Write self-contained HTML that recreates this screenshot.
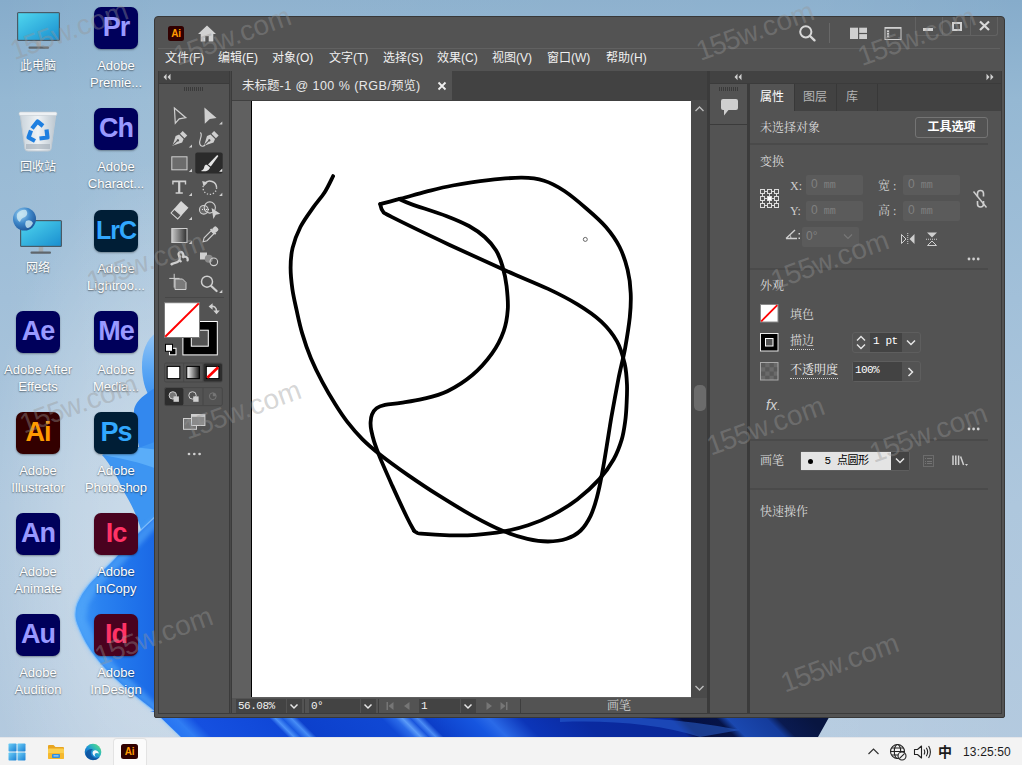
<!DOCTYPE html>
<html lang="zh-CN">
<head>
<meta charset="utf-8">
<title>Adobe Illustrator</title>
<style>
*{box-sizing:border-box;margin:0;padding:0}
html,body{width:1022px;height:765px;overflow:hidden}
body{position:relative;font-family:"Liberation Sans","Noto Sans CJK SC",sans-serif;background:#a9c4dc}
.abs{position:absolute}
#desk{position:absolute;left:0;top:0;width:1022px;height:765px;overflow:hidden;
 background:radial-gradient(ellipse 180px 380px at 160px 540px,rgba(255,255,255,.34) 0,rgba(255,255,255,.22) 50%,rgba(255,255,255,0) 100%),linear-gradient(90deg,rgba(255,255,255,0) 0,rgba(255,255,255,.08) 16%,rgba(255,255,255,.06) 80%,rgba(255,255,255,0) 100%),linear-gradient(180deg,#86accb 0%,#95b8d3 13%,#a2c0d9 39%,#aec7dd 66%,#b4cadf 100%)}
/* desktop icons */
.di{position:absolute;width:78px;text-align:center;color:#fff;font-size:13px;line-height:17px;
 text-shadow:0 1px 1.500px rgba(0,0,0,.45),0 0 2px rgba(0,0,0,.2)}
.di .ic{position:absolute;left:17px;top:1px;width:44px;height:42px;border-radius:7px;
 font-weight:bold;font-size:27px;line-height:41px;text-shadow:none;letter-spacing:-1px;text-align:center;
 box-shadow:0 1px 2px rgba(0,0,0,.35)}
.di .lb{position:absolute;left:-6px;width:90px;top:51px}
.di .lb.cj{font-size:12px;top:52px}
.pur{background:#00005b;color:#9999ff}
.blu{background:#001e36;color:#31a8ff}
.ora{background:#330000;color:#ff9a00}
.pnk{background:#49021f;color:#ff3366}
/* taskbar */
#tb{position:absolute;left:0;top:737px;width:1022px;height:28px;background:#f3f3f3;border-top:1px solid #e4e6ea}
#tb .t{position:absolute;color:#1b1b1b;font-size:13px}
/* window */
#win{position:absolute;left:154px;top:16px;width:850px;height:701px;background:#535353;border:1px solid #3c3c3c;border-radius:6px;overflow:hidden;color:#e6e6e6}
#win .w{position:absolute}
.menu{position:absolute;line-height:16px;font-size:12px;color:#f0f0f0;white-space:nowrap}
.wm{position:absolute;font-size:29px;color:rgba(255,255,255,.13);transform:rotate(-23deg);white-space:nowrap;font-family:"Liberation Sans",sans-serif;transform-origin:left bottom}
.wmd{position:absolute;font-size:29px;color:rgba(255,255,255,.35);transform:rotate(-23deg);white-space:nowrap;font-family:"Liberation Sans",sans-serif;transform-origin:left bottom}

.sf{top:699px;height:14px;background:#434343;color:#f2f2f2;font-family:"Liberation Mono","DejaVu Sans Mono",monospace;font-size:11px;line-height:14px;padding-left:2px;letter-spacing:-.5px}
.sb{top:699px;width:16px;height:14px;background:#434343;border-left:1px solid #535353}

.pt{font-size:12px;line-height:17px}
.pl{font-size:12px;line-height:16px;color:#dadada;white-space:nowrap;font-family:"Liberation Serif","Noto Serif CJK SC",serif}
.hr{left:750px;width:238px;height:2px;background:#4a4a4a}
.fl{font-size:12px;line-height:16px;color:#cfcfcf;font-family:"Liberation Serif","Noto Serif CJK SC",serif;white-space:nowrap}
.fd{width:57px;height:20px;background:#5b5b5b;border-radius:2px;color:#808080;font-family:"Liberation Mono",monospace;font-size:10px;line-height:18px;padding-left:5px;white-space:pre}
</style>
</head>
<body>
<div id="desk">
<!--BLS-->
<svg class="abs" style="left:0;top:0" width="1022" height="765" viewBox="0 0 1022 765">
<defs>
<linearGradient id="bD" x1="75" y1="0" x2="160" y2="0" gradientUnits="userSpaceOnUse"><stop offset="0" stop-color="#3f97f6"/><stop offset=".3" stop-color="#2a82f0"/><stop offset=".7" stop-color="#1f72ea"/><stop offset="1" stop-color="#1a66e4"/></linearGradient>
<linearGradient id="bS" x1="150" y1="737" x2="490" y2="397" gradientUnits="userSpaceOnUse"><stop offset="0.0000" stop-color="#2a7bec"/><stop offset="0.0221" stop-color="#1e6cf0"/><stop offset="0.0662" stop-color="#2f7cf3"/><stop offset="0.0912" stop-color="#1550e0"/><stop offset="0.2029" stop-color="#1048d8"/><stop offset="0.2118" stop-color="#4a90f8"/><stop offset="0.2221" stop-color="#1a5ae0"/><stop offset="0.2353" stop-color="#468cf6"/><stop offset="0.2456" stop-color="#0c40cc"/><stop offset="0.3676" stop-color="#1048d4"/><stop offset="0.3882" stop-color="#2a6ae8"/><stop offset="0.3985" stop-color="#5a9af8"/><stop offset="0.4103" stop-color="#1a55dc"/><stop offset="0.4206" stop-color="#4a8af4"/><stop offset="0.4324" stop-color="#0c3ec8"/><stop offset="0.5000" stop-color="#1656e0"/><stop offset="0.5250" stop-color="#2a6ae8"/><stop offset="0.5735" stop-color="#0c35b8"/><stop offset="0.6618" stop-color="#0a2aa0"/><stop offset="0.7912" stop-color="#0a2898"/><stop offset="0.8088" stop-color="#050f40"/><stop offset="0.8603" stop-color="#061448"/><stop offset="0.8765" stop-color="#1a48b0"/><stop offset="0.9338" stop-color="#153c9c"/><stop offset="0.9500" stop-color="#0a1a50"/><stop offset="1.0000" stop-color="#081540"/></linearGradient>
<linearGradient id="bA" x1="0" y1="0" x2="0" y2="1"><stop offset="0" stop-color="#94c6f6"/><stop offset=".55" stop-color="#5aa6f4"/><stop offset="1" stop-color="#3a90f0"/></linearGradient>
<filter id="bl" x="-10%" y="-10%" width="120%" height="120%"><feGaussianBlur stdDeviation="2.2"/></filter>
</defs>
<!-- upper small petals -->
<path d="M156 333 C147 339 141.500 351 142 368 C142.500 380 145 389 149 396 L160 400 L160 333 Z" fill="url(#bA)"/>
<path d="M160 384 C150 392 135 399 134 411 C133 427 138 440 139.500 449 L160 470 Z" fill="#3388ee"/>
<path d="M102 455 C116 449 132 447 141 447 L160 440 L160 540 L141 530 C138 518 132 505 124 492 C118 478 110 464 102 455 Z" fill="#3d95f2"/>
<path d="M102 455 C116 450 132 448 142 448 L160 450 L160 470 C140 462 120 458 102 455 Z" fill="#5aadf9"/>
<!-- big petal -->
<path d="M165.0 508.0 C161.0 511.7 149.7 521.3 141.0 530.0 C132.3 538.7 121.8 550.8 113.0 560.0 C104.2 569.2 94.0 577.8 88.0 585.0 C82.0 592.2 79.2 597.7 77.0 603.0 C74.8 608.3 74.7 612.7 75.0 617.0 C75.3 621.3 77.0 624.7 78.7 629.0 C80.5 633.3 82.7 638.2 85.5 643.0 C88.3 647.8 91.7 653.0 95.7 658.0 C99.7 663.0 103.9 667.9 109.3 673.3 C114.7 678.7 122.0 685.2 128.0 690.3 C133.9 695.4 140.6 700.5 145.0 704.0 C149.4 707.5 150.6 708.2 154.4 711.6 C158.2 715.0 163.6 720.3 168.0 724.5 C172.4 728.7 178.8 734.9 181.0 737.0 L260 737 L260 700 L165 700 Z" fill="url(#bD)"/>
<path d="M165.0 508.0 C161.0 511.7 149.7 521.3 141.0 530.0 C132.3 538.7 121.8 550.8 113.0 560.0 C104.2 569.2 94.0 577.8 88.0 585.0 C82.0 592.2 79.2 597.7 77.0 603.0 C74.8 608.3 74.7 612.7 75.0 617.0 C75.3 621.3 77.0 624.7 78.7 629.0 C80.5 633.3 82.7 638.2 85.5 643.0 C88.3 647.8 91.7 653.0 95.7 658.0 C99.7 663.0 103.9 667.9 109.3 673.3 C114.7 678.7 122.0 685.2 128.0 690.3 C133.9 695.4 140.6 700.5 145.0 704.0 C149.4 707.5 150.6 708.2 154.4 711.6 C158.2 715.0 163.6 720.3 168.0 724.5 C172.4 728.7 178.8 734.9 181.0 737.0 L189.0 734.0 L176.0 721.5 L162.4 708.6 L153.0 701.0 L139.0 687.3 L120.3 670.3 L106.7 655.0 L96.5 640.0 L89.7 626.0 L86.0 619.0 L88.0 605.0 L99.0 587.0 L124.0 562.0 L152.0 532.0 L176.0 510.0 Z" fill="#5aaefb" opacity=".55" filter="url(#bl)"/>
<path d="M165.0 508.0 C161.0 511.7 149.7 521.3 141.0 530.0 C132.3 538.7 121.8 550.8 113.0 560.0 C104.2 569.2 94.0 577.8 88.0 585.0 C82.0 592.2 79.2 597.7 77.0 603.0 C74.8 608.3 74.7 612.7 75.0 617.0 C75.3 621.3 77.0 624.7 78.7 629.0 C80.5 633.3 82.7 638.2 85.5 643.0 C88.3 647.8 91.7 653.0 95.7 658.0 C99.7 663.0 103.9 667.9 109.3 673.3 C114.7 678.7 122.0 685.2 128.0 690.3 C133.9 695.4 140.6 700.5 145.0 704.0 C149.4 707.5 150.6 708.2 154.4 711.6 C158.2 715.0 163.6 720.3 168.0 724.5 C172.4 728.7 178.8 734.9 181.0 737.0" fill="none" stroke="#8cc6fb" stroke-width="1.2" opacity=".8"/>
<!-- strip under window -->
<path d="M150 712 L832 712 L818 737 L181 737 L154 711 Z" fill="url(#bS)"/>
<path d="M560 716 C620 716 680 718 740 730 L700 737 C660 724 610 720 560 722 Z" fill="#2a60d0" opacity=".55"/>
</svg>
<!--BLE-->

<div class="di" style="left:-1px;top:6px"><svg class="abs" style="left:17px;top:4px" width="46" height="42" viewBox="0 0 46 42">
<defs><linearGradient id="mon" x1="0" y1="0" x2="1" y2="1"><stop offset="0" stop-color="#4fd6ee"/><stop offset="1" stop-color="#1a8fd0"/></linearGradient></defs>
<rect x="1" y="2" width="43" height="29" rx="1.5" fill="#4a5a66"/><rect x="2.2" y="3.2" width="40.600" height="26.600" fill="url(#mon)"/>
<rect x="20.500" y="31" width="4.500" height="6" fill="#a4abb1"/><rect x="12.500" y="36.500" width="20.500" height="2.300" rx="1" fill="#5f666c"/></svg>
<div class="lb cj">此电脑</div></div>
<div class="di" style="left:-1px;top:107px"><svg class="abs" style="left:19px;top:4px" width="40" height="42" viewBox="0 0 40 42">
<defs><linearGradient id="bin" x1="0" y1="0" x2="1" y2="0"><stop offset="0" stop-color="#c9d3db"/><stop offset=".5" stop-color="#eef2f5"/><stop offset="1" stop-color="#bcc7d0"/></linearGradient></defs>
<path d="M2 2 L38 2 L33 38 Q32.700 40 30 40 L10 40 Q7.300 40 7 38 Z" fill="url(#bin)" stroke="#c3cbd2" stroke-width="1"/>
<rect x="1" y="1" width="38" height="3.500" rx="1.500" fill="#eef1f4" stroke="#c3cbd2" stroke-width=".6"/>
<g fill="none" stroke="#1e7fe0" stroke-width="4.200" stroke-linejoin="round"><path d="M14 17.500 L19.500 10.500 L25 15"/><path d="M28.500 18.500 L29.500 26.500 L21.500 27.500"/><path d="M17 30 L10.500 26.500 L13 19.500"/></g><rect x="8" y="33" width="24" height="5" fill="#9aa6b0" opacity=".55"/></svg>
<div class="lb cj">回收站</div></div>
<div class="di" style="left:-1px;top:208px"><svg class="abs" style="left:13px;top:-2px" width="52" height="50" viewBox="0 0 52 50">
<rect x="8" y="14" width="42" height="27" rx="1.500" fill="#4a5a66"/><rect x="9.200" y="15.200" width="39.600" height="24.600" fill="url(#mon)"/>
<rect x="26.700" y="41" width="4.500" height="5" fill="#a4abb1"/><rect x="18.500" y="45.500" width="20.500" height="2.300" rx="1" fill="#5f666c"/>
<defs><radialGradient id="glb" cx=".35" cy=".3" r=".8"><stop offset="0" stop-color="#9fd4f5"/><stop offset=".5" stop-color="#3d86c8"/><stop offset="1" stop-color="#1b4f93"/></radialGradient></defs><circle cx="12.500" cy="13" r="11.500" fill="url(#glb)"/><path d="M5 8 Q9 3 14 4 Q17 8 13 11 Q9 12 8 16 Q4 14 5 8Z M14 15 Q19 13 21 17 Q19 22 15 22 Q12 19 14 15Z" fill="#cfeaf2" opacity=".8"/></svg>
<div class="lb cj">网络</div></div>
<div class="di" style="left:77px;top:6px"><div class="ic pur">Pr</div><div class="lb">Adobe<br>Premie...</div></div>
<div class="di" style="left:77px;top:107px"><div class="ic pur">Ch</div><div class="lb">Adobe<br>Charact...</div></div>
<div class="di" style="left:77px;top:209px"><div class="ic blu" style="font-size:25px">LrC</div><div class="lb">Adobe<br>Lightroo...</div></div>
<div class="di" style="left:-1px;top:310px"><div class="ic pur">Ae</div><div class="lb">Adobe After<br>Effects</div></div>
<div class="di" style="left:77px;top:310px"><div class="ic pur">Me</div><div class="lb">Adobe<br>Media...</div></div>
<div class="di" style="left:-1px;top:411px"><div class="ic ora">Ai</div><div class="lb">Adobe<br>Illustrator</div></div>
<div class="di" style="left:77px;top:411px"><div class="ic blu">Ps</div><div class="lb">Adobe<br>Photoshop</div></div>
<div class="di" style="left:-1px;top:512px"><div class="ic pur">An</div><div class="lb">Adobe<br>Animate</div></div>
<div class="di" style="left:77px;top:512px"><div class="ic pnk">Ic</div><div class="lb">Adobe<br>InCopy</div></div>
<div class="di" style="left:-1px;top:613px"><div class="ic pur">Au</div><div class="lb">Adobe<br>Audition</div></div>
<div class="di" style="left:77px;top:613px"><div class="ic pnk">Id</div><div class="lb">Adobe<br>InDesign</div></div>

</div>

<div id="winbg" class="abs" style="left:154px;top:16px;width:851px;height:702px;background:#535353;border:1px solid #383838;border-radius:4px 4px 2px 2px"></div>
<div id="w" class="abs" style="left:0;top:0;width:1022px;height:765px;color:#e0e0e0">
<!-- title bar -->
<div class="abs" style="left:168px;top:26px;width:16px;height:15px;background:#300000;border-radius:2.5px;color:#ff9a00;font-weight:bold;font-size:10px;line-height:15px;text-align:center;letter-spacing:-.3px">Ai</div>
<svg class="abs" style="left:197px;top:25px" width="20" height="17" viewBox="0 0 20 17"><path d="M10 0.500 L19 9 L16.300 9 L16.300 16.500 L11.700 16.500 L11.700 11 L8.300 11 L8.300 16.500 L3.700 16.500 L3.700 9 L1 9 Z" fill="#d2d2d2"/></svg>
<div class="abs" style="left:158px;top:48px;width:842px;height:1px;background:#616161"></div>
<svg class="abs" style="left:796px;top:22px" width="24" height="22" viewBox="0 0 24 22"><circle cx="9.800" cy="9.800" r="5.600" fill="none" stroke="#d8d8d8" stroke-width="2"/><path d="M14 14 L18.500 18.300" stroke="#d8d8d8" stroke-width="2.400" stroke-linecap="round"/></svg>
<div class="abs" style="left:829px;top:23px;width:1px;height:20px;background:#686868"></div>
<svg class="abs" style="left:849px;top:27px" width="19" height="13" viewBox="0 0 19 13"><rect x="1" y=".7" width="8" height="11.300" fill="#cfcfcf"/><rect x="10.200" y=".7" width="7.800" height="5.200" fill="#cfcfcf"/><rect x="10.200" y="7.100" width="7.800" height="4.900" fill="#cfcfcf"/></svg>
<svg class="abs" style="left:884px;top:26px" width="18" height="15" viewBox="0 0 18 15"><rect x="1" y="1.500" width="16" height="12" fill="none" stroke="#cfcfcf" stroke-width="1"/><rect x="1" y="1" width="16" height="1.800" fill="#cfcfcf"/><rect x="2.500" y="4" width="3" height="8" fill="#777"/><rect x="3" y="4.500" width="2" height="1.600" fill="#cfcfcf"/><rect x="3" y="7" width="2" height="1.600" fill="#cfcfcf"/><rect x="3" y="9.500" width="2" height="1.600" fill="#cfcfcf"/></svg>
<!-- window controls -->
<div class="abs" style="left:915px;top:17px;width:83px;height:19px;border:1px solid #626262;border-top:none;border-radius:0 0 3px 3px"></div>
<div class="abs" style="left:942px;top:17px;width:1px;height:18px;background:#626262"></div>
<div class="abs" style="left:970px;top:17px;width:1px;height:18px;background:#626262"></div>
<div class="abs" style="left:923px;top:28px;width:10px;height:3px;background:#d0d0d0"></div>
<div class="abs" style="left:952px;top:22px;width:10px;height:9px;border:2px solid #d0d0d0;border-top-width:2.500px"></div>
<svg class="abs" style="left:978px;top:20px" width="13" height="12" viewBox="0 0 13 12"><path d="M2 1.500 L11 10 M11 1.500 L2 10" stroke="#d8d8d8" stroke-width="2.200"/></svg>
<!-- menu -->
<div class="menu" style="left:165px;top:50px">文件(F)</div>
<div class="menu" style="left:218px;top:50px">编辑(E)</div>
<div class="menu" style="left:272px;top:50px">对象(O)</div>
<div class="menu" style="left:329px;top:50px">文字(T)</div>
<div class="menu" style="left:383px;top:50px">选择(S)</div>
<div class="menu" style="left:437px;top:50px">效果(C)</div>
<div class="menu" style="left:492px;top:50px">视图(V)</div>
<div class="menu" style="left:547px;top:50px">窗口(W)</div>
<div class="menu" style="left:606px;top:50px">帮助(H)</div>

<!-- dark backing -->
<div class="abs" style="left:158px;top:71px;width:844px;height:643px;background:#3b3b3b"></div>
<!-- toolbar panel -->
<div class="abs" style="left:159px;top:71px;width:70px;height:12px;background:#434343"></div>
<div class="abs" style="left:159px;top:84px;width:70px;height:629px;background:#535353"></div><div class="abs" style="left:230px;top:71px;width:1px;height:642px;background:#484848"></div>
<svg class="abs" style="left:162px;top:73px" width="10" height="8" viewBox="0 0 10 8"><path d="M4.500 .8 L1.500 4 L4.500 7.200 Z M8.500 .8 L5.500 4 L8.500 7.200 Z" fill="#d0d0d0"/></svg>
<div class="abs" style="left:184px;top:87px;width:20px;height:4px;background:repeating-linear-gradient(90deg,#3a3a3a 0,#3a3a3a 1px,transparent 1px,transparent 2px)"></div>
<div class="abs" style="left:165px;top:297px;width:59px;height:1px;background:#474747"></div>

<svg class="abs" style="left:158px;top:100px" width="72" height="370" viewBox="158 100 72 370">
<defs>
<linearGradient id="gtool" x1="0" y1="0" x2="1" y2="0"><stop offset="0" stop-color="#c8c8c8"/><stop offset="1" stop-color="#2e2e2e"/></linearGradient>
<linearGradient id="gsw" x1="0" y1="0" x2="1" y2="0"><stop offset="0" stop-color="#ffffff"/><stop offset="1" stop-color="#1a1a1a"/></linearGradient>
</defs>
<!-- row1 -->
<path d="M174.400 108 L185.800 117.700 L179.200 118.800 L175.300 123.200 Z" fill="none" stroke="#cfcfcf" stroke-width="1.200" stroke-linejoin="miter"/>
<path d="M204.400 107.400 L216.600 117.900 L209.800 119 L204.800 123.800 Z" fill="#cfcfcf"/>
<path d="M222.3 121.39999999999999 L222.3 124.6 L219.10000000000002 124.6 Z" fill="#cfcfcf"/>
<!-- row2 pen -->
<g transform="translate(179.600,138.600) rotate(45)"><path d="M0 10 L-4.600 1 L-3.200 -2.500 L3.200 -2.500 L4.600 1 Z" fill="#cfcfcf"/><rect x="-3.200" y="-7.600" width="6.400" height="3.800" fill="#cfcfcf"/><path d="M0 9 L0 3" stroke="#535353" stroke-width="1"/><circle cx="0" cy="2.400" r="1.200" fill="#535353"/></g>
<path d="M192 144.4 L192 147.6 L188.8 147.6 Z" fill="#cfcfcf"/>
<g transform="translate(211,138.600) rotate(45)"><path d="M0 10 L-4.600 1 L-3.200 -2.500 L3.200 -2.500 L4.600 1 Z" fill="#cfcfcf"/><rect x="-3.200" y="-7.600" width="6.400" height="3.800" fill="#cfcfcf"/><path d="M0 9 L0 3" stroke="#535353" stroke-width="1"/><circle cx="0" cy="2.400" r="1.200" fill="#535353"/></g>
<path d="M200.300 132.500 C203.500 135 198.500 140 199.800 144 C200.500 146.800 203.500 146.800 205 145" fill="none" stroke="#cfcfcf" stroke-width="1.200"/>
<!-- row3 -->
<rect x="171.800" y="156.800" width="15.200" height="13" fill="#6c6c6c" stroke="#cfcfcf" stroke-width="1"/>
<path d="M192 168.8 L192 172 L188.8 172 Z" fill="#cfcfcf"/>
<rect x="195.300" y="152.400" width="27.400" height="21" rx="2" fill="#2b2b2b"/>
<path d="M217.200 155 L218.400 156.100 L210.800 166.600 L208 164.400 Z" fill="#e4e4e4"/>
<path d="M207.200 165 L210 167.400 C209 171.300 204.500 171.600 200.800 171 C203.800 169.800 204 168.300 204.300 166.800 C204.800 165 206 164.500 207.200 165 Z" fill="#e4e4e4"/>
<path d="M222.300 168.600 L222.300 171.800 L219.100 171.800 Z" fill="#e4e4e4"/>
<!-- row4 T -->
<path d="M172.200 180.400 H186.200 V184.600 H184.800 V182.200 H180.300 V192.300 H182.800 V193.800 H175.600 V192.300 H178.100 V182.200 H173.600 V184.600 H172.200 Z" fill="#cfcfcf"/>
<path d="M192 192.8 L192 196 L188.8 196 Z" fill="#cfcfcf"/>
<path d="M204.800 183.300 A6.800 6.800 0 0 1 216.600 187.600" fill="none" stroke="#cfcfcf" stroke-width="1.400"/>
<path d="M216.600 187.600 A6.800 6.800 0 1 1 203.200 186" fill="none" stroke="#cfcfcf" stroke-width="1.300" stroke-dasharray="1.300 1.800"/>
<path d="M202.200 181 L207.800 182.400 L203.600 186.600 Z" fill="#cfcfcf"/>
<path d="M222.3 192.8 L222.3 196 L219.10000000000002 196 Z" fill="#cfcfcf"/>
<!-- row5 eraser, shape builder -->
<g transform="translate(179.400,210.400) rotate(42)"><rect x="-5" y="-8" width="10" height="10.500" fill="#d6d6d6"/><rect x="-4.500" y="2.500" width="9" height="5" fill="none" stroke="#d6d6d6" stroke-width="1"/></g>
<path d="M192 216.8 L192 220 L188.8 220 Z" fill="#cfcfcf"/>
<circle cx="203.800" cy="209.800" r="4.300" fill="#6a6a6a" stroke="#cfcfcf" stroke-width="1.100"/>
<circle cx="209.800" cy="207.500" r="5.600" fill="none" stroke="#cfcfcf" stroke-width="1.100"/>
<path d="M202 209.500 H210" stroke="#e6e6e6" stroke-width="1.200" stroke-dasharray="1 1"/>
<path d="M211.600 208 L220.300 213.800 L215.800 214.800 L213.400 219 Z" fill="#cfcfcf"/>
<!-- row6 gradient, eyedropper -->
<rect x="171.800" y="228.500" width="15.200" height="14" fill="url(#gtool)" stroke="#cfcfcf" stroke-width="1"/>
<path d="M192 240.8 L192 244 L188.8 244 Z" fill="#cfcfcf"/>
<g transform="translate(209.800,235) rotate(45)"><rect x="-2.700" y="-10.500" width="5.400" height="5.500" rx="1.800" fill="#cfcfcf"/><rect x="-3.600" y="-5.600" width="7.200" height="1.800" fill="#cfcfcf"/><path d="M-2 -3.800 L2 -3.800 L2 6 L0 9.500 L-2 6 Z" fill="none" stroke="#cfcfcf" stroke-width="1.100"/></g>
<!-- row7 puppet warp, blend -->
<path d="M171.600 264.200 C174.500 262.200 177.500 263.500 179.300 260.200 C181 256.600 176.800 254.600 179.300 252.600 C182.300 250.800 184.600 254.600 182.400 257.600 C185 255.800 188.300 256.800 187.600 260.400" fill="none" stroke="#cfcfcf" stroke-width="2.300" stroke-linecap="round"/>
<circle cx="179.800" cy="256.400" r="1.200" fill="#cfcfcf"/><circle cx="180.500" cy="261.300" r="1.200" fill="#cfcfcf"/><circle cx="172" cy="264" r="1.300" fill="#cfcfcf"/>
<rect x="200" y="252.500" width="7" height="7" fill="#cfcfcf"/>
<circle cx="208.800" cy="258.800" r="4" fill="#8a8a8a"/>
<circle cx="213.800" cy="261.800" r="3.800" fill="none" stroke="#cfcfcf" stroke-width="1.100"/>
<!-- row8 artboard, zoom -->
<path d="M169.300 278.400 H179.500 M174.200 273.800 V287.600" stroke="#cfcfcf" stroke-width="1" fill="none"/>
<path d="M175 279 H182.500 L186 282.500 V289.500 H175 Z" fill="#7a7a7a" stroke="#cfcfcf" stroke-width="1"/>
<circle cx="207" cy="281.700" r="5.500" fill="none" stroke="#cfcfcf" stroke-width="1.500"/>
<path d="M211.200 286 L216.600 291" stroke="#cfcfcf" stroke-width="2.200" stroke-linecap="round"/>
<path d="M222.3 289.8 L222.3 293 L219.10000000000002 293 Z" fill="#cfcfcf"/>
<!-- fill/stroke -->
<rect x="182.900" y="321.500" width="34.400" height="33.400" fill="#000" stroke="#fff" stroke-width="1"/>
<rect x="191.300" y="330.200" width="17" height="16" fill="#535353" stroke="#fff" stroke-width="1"/>
<rect x="164.500" y="302.700" width="35" height="34.800" fill="#fff" stroke="#7a7a7a" stroke-width="1"/>
<path d="M165.200 336.800 L198.800 303.400" stroke="#ff0000" stroke-width="2"/>
<path d="M210.500 306.500 C214 305.500 216.500 307.500 216.500 311" fill="none" stroke="#cfcfcf" stroke-width="1.500"/>
<path d="M208.600 306.600 L212.600 303.200 L212.600 309.800 Z M216.500 314.200 L213.200 310.400 L219.800 310.400 Z" fill="#cfcfcf"/>
<rect x="169.500" y="348.300" width="6.500" height="6.500" fill="#000" stroke="#fff" stroke-width="1"/>
<rect x="165.500" y="344.300" width="7" height="7" fill="#fff" stroke="#000" stroke-width="1"/>
<!-- color mode row -->
<rect x="164.500" y="363" width="57.800" height="19" rx="1.500" fill="none" stroke="#474747" stroke-width="1"/>
<path d="M183.600 363 V382 M203 363 V382" stroke="#474747" stroke-width="1"/>
<rect x="203.500" y="363.500" width="18.500" height="18" rx="1.500" fill="#2d2d2d"/>
<rect x="167.200" y="366.400" width="12.600" height="12.200" fill="#fff" stroke="#000" stroke-width="1"/>
<rect x="186.800" y="366.400" width="12.600" height="12.200" fill="url(#gsw)" stroke="#000" stroke-width="1"/>
<rect x="206.300" y="366.400" width="12.600" height="12.200" fill="#fff" stroke="#000" stroke-width="1"/>
<path d="M207.300 377.800 L218.200 367.300" stroke="#ff0000" stroke-width="2.600"/>
<!-- draw mode row -->
<rect x="164.500" y="387.600" width="57.800" height="18" rx="1.500" fill="none" stroke="#474747" stroke-width="1"/>
<rect x="165" y="388" width="18.400" height="17.200" rx="1.500" fill="#2d2d2d"/>
<path d="M203 388 V405" stroke="#474747" stroke-width="1"/>
<circle cx="172.800" cy="395.400" r="3.700" fill="#777" stroke="#cfcfcf" stroke-width="1"/><rect x="173.500" y="396.400" width="5.400" height="5.400" fill="#cfcfcf"/>
<circle cx="192.500" cy="395.400" r="3.700" fill="none" stroke="#cfcfcf" stroke-width="1"/><rect x="193.200" y="396.400" width="5.400" height="5.400" fill="#cfcfcf"/>
<circle cx="212.800" cy="396.200" r="3.400" fill="none" stroke="#767676" stroke-width="1"/><path d="M212.800 396.200 L216 396.200 A3.200 3.200 0 0 0 212.800 393 Z" fill="#767676"/>
<!-- screen mode -->
<rect x="183.500" y="418.500" width="13" height="10.800" fill="#777" stroke="#cfcfcf" stroke-width="1"/>
<rect x="191.500" y="414.500" width="13.400" height="11" fill="#8a8a8a" stroke="#cfcfcf" stroke-width="1"/><rect x="191.500" y="414.500" width="13.400" height="2.300" fill="#cfcfcf"/>
<circle cx="189" cy="454" r="1.350" fill="#cfcfcf"/><circle cx="194.300" cy="454" r="1.350" fill="#cfcfcf"/><circle cx="199.600" cy="454" r="1.350" fill="#cfcfcf"/>
</svg>



<!-- document area -->
<div class="abs" style="left:232px;top:71px;width:475px;height:29px;background:#424242"></div>
<div class="abs" style="left:232px;top:71px;width:220px;height:29px;background:#535353"></div>
<div class="abs" style="left:242px;top:78px;font-size:12.500px;line-height:16px;color:#e8e8e8;white-space:nowrap">未标题<span style="letter-spacing:.45px">-1 @ 100 % (RGB/</span>预览)</div>
<svg class="abs" style="left:437px;top:81px" width="10" height="10" viewBox="0 0 10 10"><path d="M1.500 1.500 L8.500 8.500 M8.500 1.500 L1.500 8.500" stroke="#f0f0f0" stroke-width="1.800"/></svg>
<div class="abs" style="left:232px;top:100px;width:475px;height:598px;background:#606060;border-top:1px solid #404040"></div>
<div class="abs" style="left:251px;top:101px;width:440px;height:596px;background:#fff;border-left:1px solid #000"></div>
<!-- v scrollbar -->
<div class="abs" style="left:691px;top:100px;width:16px;height:598px;background:#4a4a4a"></div>
<svg class="abs" style="left:694px;top:105px" width="11" height="8" viewBox="0 0 11 8"><path d="M1.500 6 L5.500 2 L9.500 6" fill="none" stroke="#bdbdbd" stroke-width="1.400"/></svg>
<svg class="abs" style="left:694px;top:684px" width="11" height="8" viewBox="0 0 11 8"><path d="M1.500 2 L5.500 6 L9.500 2" fill="none" stroke="#bdbdbd" stroke-width="1.400"/></svg>
<div class="abs" style="left:694px;top:385px;width:12px;height:26px;border-radius:5px;background:#6b6b6b"></div>
<!--ARTS--><svg class="abs" style="left:252px;top:101px" width="439" height="596" viewBox="252 101 439 596">
<g fill="none" stroke="#000" stroke-width="3.8" stroke-linecap="round" stroke-linejoin="round">
<path d="M333.1 176.1 C331.7 178.8 328.1 186.9 324.7 192.2 C321.3 197.5 316.9 202.1 312.9 207.9 C308.8 213.7 303.8 220.3 300.4 227.0 C297.0 233.7 294.3 241.0 292.6 247.9 C291.0 254.7 290.6 261.3 290.6 268.1 C290.6 275.0 291.4 282.2 292.4 289.2 C293.4 296.2 295.0 302.8 296.6 310.2 C298.2 317.5 299.8 325.4 302.2 333.4 C304.6 341.5 307.5 350.2 310.9 358.3 C314.3 366.4 318.3 374.5 322.4 382.2 C326.5 389.9 331.2 397.8 335.3 404.3 C339.4 410.9 342.6 415.8 347.1 421.6 C351.6 427.4 356.8 433.5 362.3 439.1 C367.8 444.6 372.7 448.8 380.2 454.7 C387.7 460.6 397.6 467.8 407.3 474.6 C417.0 481.3 427.2 488.2 438.3 495.2 C449.3 502.1 462.9 510.4 473.6 516.4 C484.3 522.3 493.6 527.1 502.6 530.8 C511.6 534.5 519.8 537.0 527.4 538.8 C535.0 540.6 541.5 541.5 548.0 541.5 C554.5 541.5 561.2 540.6 566.6 538.8 C572.1 536.9 576.7 534.3 580.7 530.5 C584.7 526.6 587.9 521.3 590.6 515.8 C593.3 510.3 595.0 504.4 596.9 497.4 C598.8 490.5 600.4 482.5 602.0 473.9 C603.6 465.4 605.2 455.6 606.7 446.2 C608.3 436.7 609.5 428.2 611.4 417.0 C613.4 405.8 616.2 390.5 618.4 379.0 C620.7 367.5 623.3 358.1 625.2 347.8 C627.0 337.6 628.8 326.5 629.8 317.3 C630.7 308.2 631.1 301.0 630.7 293.1 C630.4 285.2 629.5 277.5 627.6 269.8 C625.7 262.1 623.2 254.1 619.6 247.0 C616.0 239.8 611.4 233.4 605.9 227.0 C600.4 220.6 593.6 214.7 586.6 208.7 C579.7 202.7 571.5 195.7 564.4 191.0 C557.3 186.4 551.2 183.0 544.1 180.8 C537.0 178.5 531.1 177.8 521.9 177.7 C512.6 177.6 500.1 178.8 488.6 180.1 C477.0 181.4 463.1 183.6 452.7 185.5 C442.3 187.4 434.8 189.5 426.2 191.7 C417.5 193.9 408.4 196.7 400.8 198.7 C393.1 200.8 383.6 203.2 380.2 204.1"/>
<path d="M380.2 204.1 C380.6 205.2 380.8 208.9 382.7 211.0 C384.6 213.1 380.5 211.3 391.6 216.9 C402.7 222.5 430.6 236.0 449.1 244.7 C467.5 253.3 485.8 261.7 502.3 269.1 C518.8 276.5 535.5 283.0 548.1 288.9 C560.6 294.8 568.6 298.9 577.5 304.4 C586.4 309.8 594.7 315.5 601.3 321.7 C607.9 327.9 613.2 334.6 617.1 341.7 C621.0 348.7 623.0 356.7 624.7 363.8 C626.3 371.0 626.7 377.8 627.0 384.8 C627.3 391.7 626.8 399.7 626.5 405.8 C626.2 411.8 626.0 415.6 625.2 421.2 C624.4 426.8 623.6 433.3 621.7 439.6 C619.8 445.9 617.4 452.6 613.7 459.2 C610.0 465.8 605.5 472.4 599.4 479.1 C593.3 485.8 585.0 493.4 577.2 499.4 C569.3 505.4 560.5 510.8 552.3 515.1 C544.1 519.4 536.4 522.6 528.1 525.3 C519.8 528.1 511.3 530.1 502.6 531.7 C493.9 533.3 484.7 534.2 475.8 534.8 C467.0 535.5 458.6 535.5 449.4 535.3 C440.3 535.1 426.5 534.2 421.0 533.7 C415.5 533.2 417.6 533.0 416.5 532.5 C415.4 532.0 414.5 531.1 414.1 530.8"/>
<path d="M414.1 530.8 C413.0 528.7 411.0 525.6 407.3 518.0 C403.6 510.4 396.6 495.4 392.1 485.4 C387.6 475.3 383.1 465.2 380.1 457.9 C377.1 450.7 375.7 446.5 374.2 441.9 C372.8 437.3 372.0 433.8 371.3 430.5 C370.7 427.2 370.4 424.7 370.6 422.1 C370.7 419.4 371.0 416.9 372.0 414.6 C373.0 412.3 374.3 409.9 376.5 408.3 C378.6 406.7 381.0 405.8 385.0 404.9 C389.1 404.0 394.4 403.8 400.7 402.8 C407.0 401.8 415.2 400.8 423.0 398.9 C430.8 397.0 439.2 395.2 447.4 391.2 C455.6 387.2 465.0 381.2 472.4 375.0 C479.8 368.7 486.7 360.8 491.9 353.6 C497.1 346.3 501.0 338.7 503.6 331.3 C506.3 323.9 507.3 316.7 507.8 309.2 C508.3 301.7 507.4 293.4 506.6 286.2 C505.7 279.1 504.3 272.5 502.6 266.6 C500.9 260.6 499.1 255.5 496.1 250.5 C493.1 245.6 489.2 241.1 484.7 237.0 C480.1 232.9 475.3 229.5 469.0 226.0 C462.6 222.6 456.4 219.9 446.8 216.2 C437.2 212.6 419.1 206.9 411.2 204.1 C403.3 201.3 401.4 200.0 399.4 199.2"/>
</g>
<circle cx="585.3" cy="239.4" r="2" fill="none" stroke="#444" stroke-width=".8"/>
</svg><!--ARTE-->
<!-- status bar -->
<div class="abs" style="left:232px;top:698px;width:475px;height:15px;background:#535353"></div>
<div class="abs sf" style="left:236px;width:50px">56.08%</div><div class="abs sb" style="left:286px"></div>
<div class="abs sf" style="left:309px;width:51px">0°</div><div class="abs sb" style="left:360px"></div>
<div class="abs sf" style="left:419px;width:41px">1</div><div class="abs sb" style="left:460px"></div>
<div class="abs" style="left:304px;top:699px;width:1px;height:14px;background:#3e3e3e"></div>
<div class="abs" style="left:378px;top:699px;width:1px;height:14px;background:#3e3e3e"></div>
<div class="abs" style="left:520px;top:699px;width:1px;height:14px;background:#3e3e3e"></div>
<svg class="abs" style="left:286px;top:698px" width="240" height="16" viewBox="286 698 240 16">
<g fill="none" stroke="#e6e6e6" stroke-width="1.500"><path d="M290.500 704.500 L294 708 L297.500 704.500"/><path d="M364.500 704.500 L368 708 L371.500 704.500"/><path d="M464.500 704.500 L468 708 L471.500 704.500"/></g>
<g fill="#767676"><rect x="386.500" y="702" width="1.500" height="8"/><path d="M393.500 702 V710 L388.500 706 Z"/><path d="M409.500 702 V710 L404 706 Z"/><path d="M486.500 702 V710 L492 706 Z"/><path d="M500.500 702 V710 L505.500 706 Z"/><rect x="506" y="702" width="1.500" height="8"/></g>
</svg>
<div class="abs" style="left:607px;top:699px;font-size:12px;line-height:15px;color:#cfcfcf;font-family:'Liberation Serif','Noto Serif CJK SC',serif">画笔</div>


<!-- right dock -->
<div class="abs" style="left:710px;top:71px;width:291px;height:12px;background:#424242"></div>
<svg class="abs" style="left:733px;top:73px" width="10" height="8" viewBox="0 0 10 8"><path d="M4.500 .8 L1.500 4 L4.500 7.200 Z M8.500 .8 L5.500 4 L8.500 7.200 Z" fill="#d0d0d0"/></svg>
<svg class="abs" style="left:985px;top:73px" width="10" height="8" viewBox="0 0 10 8"><path d="M1.500 .8 L4.500 4 L1.500 7.200 Z M5.500 .8 L8.500 4 L5.500 7.200 Z" fill="#d0d0d0"/></svg>
<div class="abs" style="left:710px;top:84px;width:37px;height:40px;background:#535353"></div>
<div class="abs" style="left:710px;top:125px;width:37px;height:588px;background:#535353"></div>
<div class="abs" style="left:719px;top:87px;width:20px;height:4px;background:repeating-linear-gradient(90deg,#3a3a3a 0,#3a3a3a 1px,transparent 1px,transparent 2px)"></div>
<svg class="abs" style="left:720px;top:98px" width="19" height="19" viewBox="0 0 19 19"><path d="M3 1 H16 Q18 1 18 3 V10 Q18 12 16 12 H8.500 L4 17.500 V12 H3 Q1 12 1 10 V3 Q1 1 3 1 Z" fill="#cfcfcf"/></svg>
<!-- properties panel -->
<div class="abs" style="left:750px;top:84px;width:251px;height:27px;background:#424242"></div>
<div class="abs" style="left:750px;top:111px;width:251px;height:602px;background:#535353"></div>
<div class="abs" style="left:750px;top:84px;width:44px;height:28px;background:#535353"></div>
<div class="abs" style="left:836px;top:84px;width:1px;height:27px;background:#383838"></div>
<div class="abs" style="left:877px;top:84px;width:1px;height:27px;background:#383838"></div>
<div class="abs" style="left:794px;top:84px;width:1px;height:27px;background:#383838"></div>
<div class="abs pt" style="left:760px;top:89px;color:#fff">属性</div>
<div class="abs pt" style="left:803px;top:89px;color:#b4b4b4">图层</div>
<div class="abs pt" style="left:846px;top:89px;color:#b4b4b4">库</div>
<div class="abs pl" style="left:760px;top:120px">未选择对象</div>
<div class="abs" style="left:915px;top:117px;width:73px;height:21px;border:1px solid #747474;border-radius:3px;color:#fff;font-size:12px;line-height:19px;text-align:center;font-weight:bold">工具选项</div>
<div class="abs hr" style="top:143px"></div>
<div class="abs pl" style="left:760px;top:154px">变换</div>
<svg class="abs" style="left:760px;top:189px" width="19" height="19" viewBox="0 0 19 19" shape-rendering="crispEdges"><g stroke="#dcdcdc" stroke-width="1"><path d="M5 2.500 H7 M12 2.500 H14 M5 9.500 H7 M12 9.500 H14 M5 16.500 H7 M12 16.500 H14 M2.500 5 V7 M2.500 12 V14 M9.500 5 V7 M9.500 12 V14 M16.500 5 V7 M16.500 12 V14" fill="none"/><rect x="0.5" y="0.5" width="4" height="4" fill="#535353"/><rect x="7.5" y="0.5" width="4" height="4" fill="#535353"/><rect x="14.5" y="0.5" width="4" height="4" fill="#535353"/><rect x="0.5" y="7.5" width="4" height="4" fill="#535353"/><rect x="7.5" y="7.5" width="4" height="4" fill="#fff"/><rect x="14.5" y="7.5" width="4" height="4" fill="#535353"/><rect x="0.5" y="14.5" width="4" height="4" fill="#535353"/><rect x="7.5" y="14.5" width="4" height="4" fill="#535353"/><rect x="14.5" y="14.5" width="4" height="4" fill="#535353"/></g></svg>
<div class="abs fl" style="left:790px;top:178px">X:</div><div class="abs fd" style="left:806px;top:175px"><span style="font-family:'Liberation Sans',sans-serif;font-size:12px">0</span> mm</div>
<div class="abs fl" style="left:790px;top:203px">Y:</div><div class="abs fd" style="left:806px;top:201px"><span style="font-family:'Liberation Sans',sans-serif;font-size:12px">0</span> mm</div>
<div class="abs fl" style="left:878px;top:178px">宽 :</div><div class="abs fd" style="left:903px;top:175px"><span style="font-family:'Liberation Sans',sans-serif;font-size:12px">0</span> mm</div>
<div class="abs fl" style="left:878px;top:203px">高 :</div><div class="abs fd" style="left:903px;top:201px"><span style="font-family:'Liberation Sans',sans-serif;font-size:12px">0</span> mm</div>
<svg class="abs" style="left:970px;top:188px" width="20" height="22" viewBox="0 0 20 22"><g fill="none" stroke="#cfcfcf" stroke-width="1.600"><path d="M7.500 8.500 V5.500 A3 3 0 0 1 13.500 5.500 V8.500"/><path d="M7.500 13 V16 A3 3 0 0 0 13.500 16 V13"/><path d="M3.500 3.500 L16.500 19.500" stroke-width="1.400"/></g></svg>
<svg class="abs" style="left:785px;top:228px" width="16" height="13" viewBox="0 0 16 13"><path d="M1 10.500 H12 M1 10.500 L10 2" fill="none" stroke="#cfcfcf" stroke-width="1.300"/><path d="M6 10.500 A5 5 0 0 0 4.700 7" fill="none" stroke="#cfcfcf" stroke-width="1"/><rect x="13.500" y="5" width="1.500" height="1.500" fill="#cfcfcf"/><rect x="13.500" y="9.500" width="1.500" height="1.500" fill="#cfcfcf"/></svg>
<div class="abs fd" style="left:802px;top:227px;width:57px;font-size:12px;font-family:'Liberation Sans',sans-serif;padding-left:4px;letter-spacing:0">0°</div>
<svg class="abs" style="left:843px;top:233px" width="10" height="7" viewBox="0 0 10 7"><path d="M1 1.500 L5 5.500 L9 1.500" fill="none" stroke="#777" stroke-width="1.200"/></svg>
<svg class="abs" style="left:900px;top:232px" width="16" height="14" viewBox="0 0 16 14"><path d="M1.500 2.500 L6 7 L1.500 11.500 Z" fill="none" stroke="#cfcfcf" stroke-width="1"/><path d="M14.500 2 L9.500 7 L14.500 12 Z" fill="#cfcfcf"/><path d="M7.750 1 V13" stroke="#cfcfcf" stroke-width="1" stroke-dasharray="1 1"/></svg>
<svg class="abs" style="left:925px;top:231px" width="14" height="16" viewBox="0 0 14 16"><path d="M2 1.500 L7 6.500 L12 1.500 Z" fill="#cfcfcf"/><path d="M2.500 14.500 L7 10 L11.500 14.500 Z" fill="none" stroke="#cfcfcf" stroke-width="1"/><path d="M1 8.250 H13" stroke="#cfcfcf" stroke-width="1" stroke-dasharray="1 1"/></svg>
<svg class="abs" style="left:966px;top:256px" width="16" height="6" viewBox="0 0 16 6"><circle cx="3" cy="3" r="1.400" fill="#cfcfcf"/><circle cx="7.600" cy="3" r="1.400" fill="#cfcfcf"/><circle cx="12.200" cy="3" r="1.400" fill="#cfcfcf"/></svg>
<div class="abs hr" style="top:268px"></div>
<div class="abs pl" style="left:760px;top:278px">外观</div>
<svg class="abs" style="left:760px;top:304px" width="19" height="19" viewBox="0 0 19 19"><rect x=".5" y=".5" width="17.500" height="17.500" fill="#fff" stroke="#8a8a8a"/><path d="M1.200 17.300 L17.300 1.200" stroke="#f00" stroke-width="1.800"/></svg>
<div class="abs pl" style="left:790px;top:307px">填色</div>
<svg class="abs" style="left:760px;top:333px" width="19" height="19" viewBox="0 0 19 19"><rect x=".5" y=".5" width="17.500" height="17.500" fill="#000" stroke="#e8e8e8"/><rect x="5.500" y="5.500" width="7.500" height="7.500" fill="#535353" stroke="#fff"/></svg>
<div class="abs pl" style="left:790px;top:334px;border-bottom:1px dotted #d0d0d0;line-height:15px">描边</div>
<div class="abs" style="left:852px;top:332px;width:69px;height:21px;border:1px solid #5e5e5e;border-radius:3px;background:#535353"></div>
<div class="abs" style="left:870px;top:333px;width:32px;height:19px;background:#434343;color:#fff;font-family:'Liberation Mono',monospace;font-size:11px;line-height:17px;padding-left:3px;letter-spacing:-.4px">1 pt</div>
<svg class="abs" style="left:854px;top:334px" width="14" height="17" viewBox="0 0 14 17"><path d="M3 6.500 L7 2.500 L11 6.500 M3 10.500 L7 14.500 L11 10.500" fill="none" stroke="#e6e6e6" stroke-width="1.400"/></svg>
<svg class="abs" style="left:905px;top:338px" width="12" height="9" viewBox="0 0 12 9"><path d="M2 2.500 L6 6.500 L10 2.500" fill="none" stroke="#e6e6e6" stroke-width="1.500"/></svg>
<svg class="abs" style="left:760px;top:362px" width="19" height="19" viewBox="0 0 19 19"><rect x="1" y="1" width="17" height="17" fill="#6a6a6a"/><g fill="#5a5a5a"><rect x="1" y="1" width="4.250" height="4.250"/><rect x="9.500" y="1" width="4.250" height="4.250"/><rect x="5.250" y="5.250" width="4.250" height="4.250"/><rect x="13.750" y="5.250" width="4.250" height="4.250"/><rect x="1" y="9.500" width="4.250" height="4.250"/><rect x="9.500" y="9.500" width="4.250" height="4.250"/><rect x="5.250" y="13.750" width="4.250" height="4.250"/><rect x="13.750" y="13.750" width="4.250" height="4.250"/></g><rect x=".5" y=".5" width="17.500" height="17.500" fill="none" stroke="#a8a8a8"/></svg>
<div class="abs pl" style="left:790px;top:363px;border-bottom:1px dotted #d0d0d0;line-height:15px;color:#f0f0f0">不透明度</div>
<div class="abs" style="left:852px;top:361px;width:69px;height:21px;border:1px solid #5e5e5e;border-radius:3px;background:#535353"></div>
<div class="abs" style="left:853px;top:362px;width:49px;height:19px;background:#434343;color:#fff;font-family:'Liberation Mono',monospace;font-size:11px;line-height:17px;padding-left:2px;letter-spacing:-.6px">100%</div>
<svg class="abs" style="left:906px;top:366px" width="9" height="12" viewBox="0 0 9 12"><path d="M2.500 2 L6.500 6 L2.500 10" fill="none" stroke="#e6e6e6" stroke-width="1.500"/></svg>
<div class="abs" style="left:766px;top:396px;font-family:'Liberation Sans',sans-serif;font-style:italic;font-size:14px;line-height:18px;color:#cfcfcf">fx<span style="font-size:9px;font-style:normal">.</span></div>
<svg class="abs" style="left:966px;top:426px" width="16" height="6" viewBox="0 0 16 6"><circle cx="3" cy="3" r="1.400" fill="#cfcfcf"/><circle cx="7.600" cy="3" r="1.400" fill="#cfcfcf"/><circle cx="12.200" cy="3" r="1.400" fill="#cfcfcf"/></svg>
<div class="abs hr" style="top:439px"></div>
<div class="abs pl" style="left:760px;top:453px">画笔</div>
<div class="abs" style="left:800px;top:451px;width:110px;height:20px;border:1px solid #5e5e5e;border-radius:2px"></div>
<div class="abs" style="left:801px;top:452px;width:90px;height:18px;background:#e4e4e4;color:#000;font-size:11px;line-height:18px;white-space:pre;font-family:'Liberation Mono','Noto Sans CJK SC',monospace;letter-spacing:-.4px;padding-left:23.500px"><span style="position:absolute;left:6.500px;top:6.500px;width:5px;height:5px;border-radius:50%;background:#000"></span>5 点圆形</div><div class="abs" style="left:891px;top:452px;width:18px;height:18px;background:#434343"></div>
<svg class="abs" style="left:894px;top:456px" width="12" height="9" viewBox="0 0 12 9"><path d="M2 2.500 L6 6.500 L10 2.500" fill="none" stroke="#e6e6e6" stroke-width="1.500"/></svg>
<svg class="abs" style="left:923px;top:455px" width="12" height="13" viewBox="0 0 12 13" shape-rendering="crispEdges"><rect x=".5" y=".5" width="10" height="11" fill="none" stroke="#6c6c6c"/><path d="M2 3.500 H3 M4 3.500 H9 M2 6 H3 M4 6 H9 M2 8.500 H3 M4 8.500 H9" stroke="#747474" stroke-width="1"/></svg>
<svg class="abs" style="left:951px;top:454px" width="18" height="13" viewBox="0 0 18 13"><path d="M2 1.500 V11 M4.800 1.500 V11 M7.600 1.500 V11 M9.600 2.500 L12.600 11" stroke="#cfcfcf" stroke-width="1.500" fill="none"/><path d="M14 10 H17 L15.500 12 Z" fill="#cfcfcf"/></svg>
<div class="abs hr" style="top:488px"></div>
<div class="abs pl" style="left:760px;top:504px">快速操作</div>

</div>


<div id="tb">
<div class="abs" style="left:113px;top:0px;width:34px;height:28px;background:#fbfbfb;border:1px solid #e3e3e3;border-bottom:none;border-radius:4px 4px 0 0"></div>
<svg class="abs" style="left:8px;top:5px" width="18" height="18" viewBox="0 0 18 18"><defs><linearGradient id="wl" x1="0" y1="0" x2="1" y2="1"><stop offset="0" stop-color="#6fd0f7"/><stop offset="1" stop-color="#1a7fd4"/></linearGradient></defs><g fill="url(#wl)"><rect x=".5" y=".5" width="8" height="8" rx=".8"/><rect x="9.500" y=".5" width="8" height="8" rx=".8"/><rect x=".5" y="9.500" width="8" height="8" rx=".8"/><rect x="9.500" y="9.500" width="8" height="8" rx=".8"/></g></svg>
<svg class="abs" style="left:47px;top:6px" width="18" height="16" viewBox="0 0 18 16"><path d="M1 2 Q1 1 2 1 H6.500 L8.500 3 H16 Q17 3 17 4 V6 H1 Z" fill="#e8a520"/><rect x="1" y="4.500" width="16" height="10.500" rx="1" fill="#fbcf4f"/><rect x="1" y="9" width="16" height="6" rx="1" fill="#f5b82e"/><rect x="5" y="10" width="8" height="4" rx=".8" fill="#2f8fe0"/><rect x="6.500" y="11.400" width="5" height="1" fill="#bfe0fb"/></svg>
<svg class="abs" style="left:84px;top:5px" width="18" height="18" viewBox="0 0 18 18"><defs><linearGradient id="eg" x1="1" y1="0" x2="0" y2="1"><stop offset="0" stop-color="#6fe070"/><stop offset=".3" stop-color="#35c1b0"/><stop offset=".55" stop-color="#1d8fd8"/><stop offset="1" stop-color="#0b4f9c"/></linearGradient></defs><circle cx="9" cy="9" r="8.300" fill="url(#eg)"/><path d="M2 12.500 C1 7 6 5.500 9 6 C6.500 7.500 6.500 11 8 13 C10 15.500 13.500 15.500 16 13.500 C14 17 9.500 18 6 16.300 C4 15.300 2.500 14 2 12.500 Z" fill="#0c4d9a" opacity=".75"/><path d="M8.600 10.600 C8.200 8.600 9.600 7.100 11.500 7.300 C13.500 7.500 14.700 9 14.900 10.600 C13.500 9.700 11.600 9.700 10.900 10.900 C10.300 12.100 11 13.200 12.300 13.500 C10.500 13.900 9 12.500 8.600 10.600 Z" fill="#f2f9fc"/></svg>
<div class="abs" style="left:121px;top:6px;width:17px;height:15px;background:#300000;border-radius:2.500px;color:#ff9a00;font-weight:bold;font-size:10px;line-height:15px;text-align:center;letter-spacing:-.3px">Ai</div>
<svg class="abs" style="left:867px;top:9px" width="13" height="9" viewBox="0 0 13 9"><path d="M1.500 7 L6.500 2 L11.500 7" fill="none" stroke="#333" stroke-width="1.200"/></svg>
<svg class="abs" style="left:889px;top:5px" width="18" height="18" viewBox="0 0 18 18"><g fill="none" stroke="#222" stroke-width="1.100"><circle cx="8.500" cy="8.500" r="7"/><ellipse cx="8.500" cy="8.500" rx="3.200" ry="7"/><path d="M1.500 8.500 H15.500 M2.500 5 H14.500 M2.500 12 H14.500"/></g><circle cx="13" cy="13" r="4" fill="#f3f3f3" stroke="#222" stroke-width="1.100"/><path d="M10.300 15.700 L15.700 10.300" stroke="#222" stroke-width="1.100"/></svg>
<svg class="abs" style="left:913px;top:6px" width="19" height="16" viewBox="0 0 19 16"><path d="M1.500 5.500 H4.500 L8.500 2 V14 L4.500 10.500 H1.500 Z" fill="none" stroke="#222" stroke-width="1.100" stroke-linejoin="round"/><path d="M11 5.500 Q12.500 8 11 10.500 M13.300 3.800 Q16 8 13.300 12.200 M15.600 2 Q19.200 8 15.600 14" fill="none" stroke="#222" stroke-width="1.100"/></svg>
<div class="t" style="left:938px;top:5px;font-size:14px;line-height:18px;font-weight:bold;font-family:'Liberation Sans','Noto Sans CJK SC',sans-serif">中</div>
<div class="t" style="left:963px;top:6px;font-size:12px;line-height:16px;letter-spacing:.15px">13:25:50</div>
</div>

<!--WMS--><svg class="abs" style="left:0;top:0;pointer-events:none" width="1022" height="765" viewBox="0 0 1022 765"><g font-family="Liberation Sans, sans-serif" font-size="28" fill="rgba(150,150,150,.4)">
<g transform="translate(72.6,39.0) rotate(-20)"><text text-anchor="end" x="1" letter-spacing="-1">155w</text><text x="0" letter-spacing=".2">.com</text></g>
<g transform="translate(235.7,44.7) rotate(-20)"><text text-anchor="end" x="1" letter-spacing="-1">155w</text><text x="0" letter-spacing=".2">.com</text></g>
<g transform="translate(758.6,39.7) rotate(-20)"><text text-anchor="end" x="1" letter-spacing="-1">155w</text><text x="0" letter-spacing=".2">.com</text></g>
<g transform="translate(920.1,45.0) rotate(-20)"><text text-anchor="end" x="1" letter-spacing="-1">155w</text><text x="0" letter-spacing=".2">.com</text></g>
<g transform="translate(149.2,270.3) rotate(-20)"><text text-anchor="end" x="1" letter-spacing="-1">155w</text><text x="0" letter-spacing=".2">.com</text></g>
<g transform="translate(833.3,268.7) rotate(-20)"><text text-anchor="end" x="1" letter-spacing="-1">155w</text><text x="0" letter-spacing=".2">.com</text></g>
<g transform="translate(82.2,412.6) rotate(-20)"><text text-anchor="end" x="1" letter-spacing="-1">155w</text><text x="0" letter-spacing=".2">.com</text></g>
<g transform="translate(245.6,418.5) rotate(-20)"><text text-anchor="end" x="1" letter-spacing="-1">155w</text><text x="0" letter-spacing=".2">.com</text></g>
<g transform="translate(769.1,434.6) rotate(-20)"><text text-anchor="end" x="1" letter-spacing="-1">155w</text><text x="0" letter-spacing=".2">.com</text></g>
<g transform="translate(931.9,441.7) rotate(-20)"><text text-anchor="end" x="1" letter-spacing="-1">155w</text><text x="0" letter-spacing=".2">.com</text></g>
<g transform="translate(157.3,644.7) rotate(-20)"><text text-anchor="end" x="1" letter-spacing="-1">155w</text><text x="0" letter-spacing=".2">.com</text></g>
<g transform="translate(843.3,671.6) rotate(-20)"><text text-anchor="end" x="1" letter-spacing="-1">155w</text><text x="0" letter-spacing=".2">.com</text></g>
</g></svg>
<!--WME-->
</body>
</html>
